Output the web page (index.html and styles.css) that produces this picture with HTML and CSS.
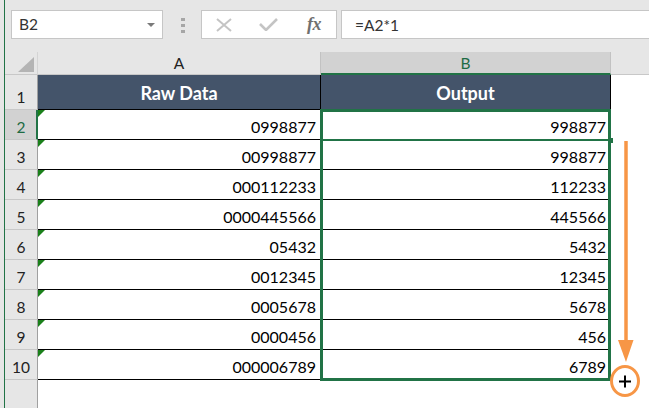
FILE: index.html
```html
<!DOCTYPE html>
<html>
<head>
<meta charset="utf-8">
<link rel="stylesheet" href="styles.css">
</head>
<body>
<div class="app">
  <div class="edge"></div>
  <div class="main">
    <div class="toolbar">
      <div class="namebox">
        <span class="namebox-text">B2</span>
        <svg class="caret" width="8" height="4" viewBox="0 0 8 4"><polygon points="0,0 8,0 4,4" fill="#7a7a7a"/></svg>
      </div>
      <div class="grip"><i></i><i></i><i></i></div>
      <div class="fbuttons">
        <svg class="ficon" width="18" height="14" viewBox="0 0 18 14"><path d="M2 1 L16 13 M16 1 L2 13" stroke="#c4c4c4" stroke-width="2" fill="none"/></svg>
        <svg class="ficon" width="19" height="13" viewBox="0 0 19 13"><path d="M1 6 L7 12 L18 1" stroke="#c4c4c4" stroke-width="2.6" fill="none"/></svg>
        <span class="fx">fx</span>
      </div>
      <div class="formula">=A2*1</div>
    </div>
    <div class="sheet">
      <div class="corner"><span class="corner-tri"></span></div>
      <div class="colhead">A</div>
      <div class="colhead colhead-active">B</div>
      <div class="colhead colhead-rest"></div>

      <div class="rowhead">1</div>
      <div class="th th-a">Raw Data</div>
      <div class="th">Output</div>
      <div class="blank"></div>

      <div class="rowhead rowhead-active">2</div>
      <div class="cell cell-a">0998877</div>
      <div class="cell">998877</div>
      <div class="blank"></div>

      <div class="rowhead">3</div>
      <div class="cell cell-a">00998877</div>
      <div class="cell">998877</div>
      <div class="blank"></div>

      <div class="rowhead">4</div>
      <div class="cell cell-a">000112233</div>
      <div class="cell">112233</div>
      <div class="blank"></div>

      <div class="rowhead">5</div>
      <div class="cell cell-a">0000445566</div>
      <div class="cell">445566</div>
      <div class="blank"></div>

      <div class="rowhead">6</div>
      <div class="cell cell-a">05432</div>
      <div class="cell">5432</div>
      <div class="blank"></div>

      <div class="rowhead">7</div>
      <div class="cell cell-a">0012345</div>
      <div class="cell">12345</div>
      <div class="blank"></div>

      <div class="rowhead">8</div>
      <div class="cell cell-a">0005678</div>
      <div class="cell">5678</div>
      <div class="blank"></div>

      <div class="rowhead">9</div>
      <div class="cell cell-a">0000456</div>
      <div class="cell">456</div>
      <div class="blank"></div>

      <div class="rowhead">10</div>
      <div class="cell cell-a">000006789</div>
      <div class="cell">6789</div>
      <div class="blank"></div>

      <div class="rowhead rowhead-last"></div>
      <div class="blank"></div>
      <div class="blank"></div>
      <div class="blank"></div>

      <div class="selection"></div>
      <div class="active-line"></div>
      <div class="fill-handle"></div>
      <svg class="annotation" width="45" height="265" viewBox="0 0 45 265">
        <line x1="21" y1="6" x2="21" y2="208" stroke="#f79646" stroke-width="3.5"/>
        <polygon points="13,205 28.5,205 21,227" fill="#f79646"/>
        <ellipse cx="20" cy="246" rx="13.5" ry="14.5" fill="#ffffff" stroke="#f79646" stroke-width="3"/>
        <path d="M14 246.5 H26 M20 240.5 V252.5" stroke="#000" stroke-width="2"/>
      </svg>
    </div>
  </div>
</div>
</body>
</html>
```

FILE: styles.css
```css
* { box-sizing: border-box; }
html, body { margin: 0; padding: 0; }
body {
  font-family: "Lato", "Liberation Sans", sans-serif;
  background: #e6e6e6;
}
.app {
  display: flex;
  width: 649px;
  height: 408px;
  overflow: hidden;
}
.edge {
  width: 5px;
  flex: none;
  background: #e6e6e6;
  border-right: 1px solid #217346;
}
.main {
  flex: 1;
  display: flex;
  flex-direction: column;
  min-width: 0;
}
.toolbar {
  height: 52px;
  flex: none;
  display: flex;
  align-items: flex-start;
  padding: 10px 0 0 6px;
  background: #e6e6e6;
}
.namebox {
  width: 152px;
  height: 29px;
  background: #fff;
  border: 1px solid #c6c6c6;
  display: flex;
  align-items: center;
  justify-content: space-between;
  padding: 0 7px 0 7px;
}
.namebox-text {
  font-size: 15.5px;
  color: #333;
  line-height: 1;
  margin-top: 1px;
}
.caret { display: block; }
.grip {
  width: 4px;
  margin: 8px 16px 0 18px;
  display: flex;
  flex-direction: column;
  gap: 3px;
}
.grip i {
  display: block;
  width: 4px;
  height: 3px;
  background: #a6a6a6;
}
.fbuttons {
  width: 136px;
  height: 29px;
  background: #fff;
  border: 1px solid #c6c6c6;
  display: flex;
  align-items: center;
  padding: 0 0 0 13px;
  gap: 26px;
}
.fx {
  font-family: "Liberation Serif", "DejaVu Serif", serif;
  font-style: italic;
  font-weight: 700;
  font-size: 18px;
  color: #707070;
  margin-left: 3px;
  letter-spacing: -0.5px;
}
.formula {
  flex: 1;
  height: 29px;
  margin-left: 4px;
  background: #fff;
  border: 1px solid #c6c6c6;
  border-right: none;
  padding: 0 0 0 13px;
  display: flex;
  align-items: center;
  font-size: 15.5px;
  color: #333;
}
.sheet {
  position: relative;
  flex: 1;
  display: grid;
  grid-template-columns: 33px 283px 290px 1fr;
  grid-template-rows: 23px 35px repeat(9, 30px) 1fr;
  background: #fff;
}
.corner {
  position: relative;
  background: #e6e6e6;
  border-right: 1px solid #d4d4d4;
  border-bottom: 1px solid #c8c8c8;
}
.corner-tri {
  position: absolute;
  right: 3px;
  bottom: 2px;
  width: 0;
  height: 0;
  border-left: 16px solid transparent;
  border-bottom: 15px solid #b4b4b4;
}
.colhead {
  background: #e6e6e6;
  border-right: 1px solid #c2c2c2;
  border-bottom: 1px solid #c8c8c8;
  display: flex;
  align-items: flex-end;
  justify-content: center;
  padding-bottom: 2px;
  font-size: 15.5px;
  color: #222;
}
.colhead-active {
  background: #d2d2d2;
  border-bottom: 2px solid #217346;
  color: #1d6b44;
  padding-bottom: 1px;
}
.colhead-rest { border-right: none; }
.rowhead {
  background: #e6e6e6;
  border-right: 1px solid #a0a0a0;
  border-bottom: 1px solid #c8c8c8;
  display: flex;
  align-items: flex-end;
  justify-content: center;
  padding-bottom: 3px;
  font-size: 15.5px;
  color: #222;
}
.rowhead-active {
  background: #d2d2d2;
  border-right: 2px solid #217346;
  color: #1d6b44;
  padding-left: 1px;
}
.rowhead-last { border-bottom: none; }
.th {
  background: #44546a;
  color: #fff;
  font-weight: 700;
  font-size: 18px;
  border-right: 1px solid #000;
  border-bottom: 1px solid #000;
  display: flex;
  align-items: flex-end;
  justify-content: center;
  padding-bottom: 5px;
}
.cell {
  position: relative;
  border-right: 1px solid #000;
  border-bottom: 1px solid #000;
  display: flex;
  align-items: flex-end;
  justify-content: flex-end;
  padding: 0 4px 3px 0;
  font-size: 16px;
  color: #000;
}
.cell-a::before {
  content: "";
  position: absolute;
  left: 0;
  top: 0;
  width: 0;
  height: 0;
  border-top: 7px solid #1a801a;
  border-right: 7px solid transparent;
}
.blank { background: #fff; }
.selection {
  position: absolute;
  left: 315px;
  top: 57px;
  width: 291px;
  height: 272px;
  border: 3px solid #217346;
  pointer-events: none;
}
.active-line {
  position: absolute;
  left: 315px;
  top: 87px;
  width: 291px;
  height: 2px;
  background: #217346;
}
.fill-handle {
  position: absolute;
  left: 603px;
  top: 86px;
  width: 5px;
  height: 5px;
  background: #217346;
}
.annotation {
  position: absolute;
  left: 600px;
  top: 83px;
}
```
